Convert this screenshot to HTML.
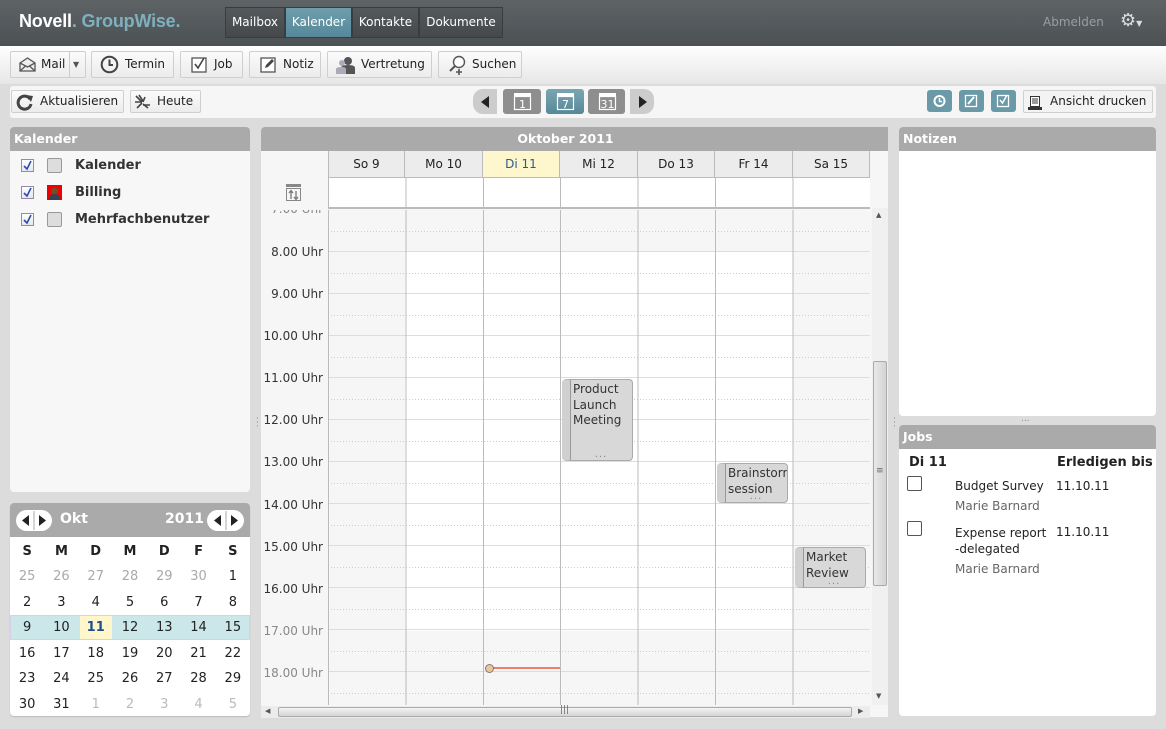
<!DOCTYPE html>
<html><head><meta charset="utf-8"><style>
*{box-sizing:border-box;margin:0;padding:0}
body{width:1166px;height:729px;overflow:hidden;background:#dcdcdc;font-family:"DejaVu Sans","Liberation Sans",sans-serif;font-size:12px;color:#222;position:relative}
.abs{position:absolute}
#top{left:0;top:0;width:1166px;height:46px;background:linear-gradient(#5e6366,#4c5154)}
.logo{left:19px;top:11px;font-family:"Liberation Sans",sans-serif;font-weight:bold;font-size:18px;color:#fff;letter-spacing:-0.2px}
.logo span{color:#7fb0be}
.tab{top:7px;height:31px;background:linear-gradient(#55595c,#45494b);border:1px solid #3a3d3f;color:#fff;font-size:12px;line-height:29px;text-align:center}
.tab.on{background:linear-gradient(#6e9eac,#55889a)}
#tb1{left:0;top:46px;width:1166px;height:38px;background:linear-gradient(#fff,#e6e6e6)}
.btn{height:27px;border:1px solid #cfcfcf;border-radius:2px;background:linear-gradient(#fbfbfb,#ececec);font-size:12px;line-height:25px;color:#222;white-space:nowrap}
.btn svg{position:absolute}
#tb2{left:10px;top:86px;width:1146px;height:32px;background:#f6f6f6;border-radius:3px}
.nav{top:89px;height:25px;background:#8e8e8e;border-radius:3px}
.panel{background:#f7f7f7;border-radius:4px;overflow:hidden}
.ph{height:24px;background:#aaa;color:#fff;font-weight:bold;font-size:12.5px;line-height:24px;padding-left:4px}
.cb{width:13px;height:13px;border:1px solid #98a;background:linear-gradient(#fff,#e4e6ee)}
.sq{width:15px;height:15px;border:1px solid #999;border-radius:2px;background:#ddd}
.lbl{font-weight:bold;font-size:13px;color:#333}
.mc{font-size:13px;text-align:center;width:34.3px}
.dh{top:151px;height:27px;background:#ececec;border-right:1px solid #bbb;border-bottom:1px solid #bbb;text-align:center;line-height:26px;font-size:12px}
.ev{background:#d8d8d8;border:1px solid #aaa;border-radius:4px;border-left:8px solid #d0d0d0;box-shadow:inset 1px 0 0 #999;font-size:12px;line-height:15.5px;color:#333;padding:2px 0 0 3px;overflow:hidden;white-space:nowrap}
.dots{position:absolute;bottom:-2px;left:0;right:0;text-align:center;color:#888;font-size:10px;letter-spacing:1px}
</style></head><body>
<div id="top" class="abs"></div>
<div class="abs logo">Novell<span>.</span> <span>GroupWise.</span></div>
<div class="abs tab" style="left:225px;width:60px">Mailbox</div>
<div class="abs tab on" style="left:285px;width:67px">Kalender</div>
<div class="abs tab" style="left:352px;width:67px">Kontakte</div>
<div class="abs tab" style="left:419px;width:84px">Dokumente</div>
<div class="abs" style="left:1043px;top:15px;color:#9a9ea0;font-size:12px">Abmelden</div>
<div class="abs" style="left:1120px;top:10px;color:#ddd;font-size:18px">⚙<span style="font-size:8px">▼</span></div>

<div id="tb1" class="abs"></div>
<div class="abs btn" style="left:10px;top:51px;width:76px;padding-left:30px">Mail<span style="position:absolute;left:58px;top:0;width:1px;height:25px;background:#ccc"></span><span style="position:absolute;left:62px;top:0;font-size:8px;color:#555">▼</span>
<svg style="left:8px;top:5px" width="17" height="15" viewBox="0 0 17 15"><path d="M1 6L8.5 1L16 6V14H1Z" fill="#eee" stroke="#555" stroke-width="1.3"/><path d="M1 6L8.5 10L16 6M1 14L6.5 9M16 14L10.5 9" fill="none" stroke="#555" stroke-width="1.3"/></svg></div>
<div class="abs btn" style="left:91px;top:51px;width:83px;padding-left:33px">Termin<svg style="left:8px;top:3px" width="19" height="19"><circle cx="9.5" cy="9.5" r="7.8" fill="none" stroke="#444" stroke-width="2"/><path d="M9.5 4.5V10H13" fill="none" stroke="#444" stroke-width="2"/></svg></div>
<div class="abs btn" style="left:180px;top:51px;width:63px;padding-left:33px">Job<svg style="left:10px;top:4px" width="17" height="17"><rect x="1" y="2" width="14" height="14" fill="#fff" stroke="#555" stroke-width="1.3"/><path d="M4 8L7 12L13 2" fill="none" stroke="#444" stroke-width="1.6"/></svg></div>
<div class="abs btn" style="left:249px;top:51px;width:72px;padding-left:33px">Notiz<svg style="left:10px;top:4px" width="17" height="17"><rect x="1" y="2" width="14" height="14" fill="#fff" stroke="#555" stroke-width="1.3"/><path d="M5 12L6 9L12 3L14 5L8 11Z" fill="#444"/></svg></div>
<div class="abs btn" style="left:327px;top:51px;width:105px;padding-left:33px">Vertretung<svg style="left:8px;top:4px" width="20" height="18"><circle cx="12" cy="5" r="4" fill="#555"/><path d="M5 18V12Q5 9 12 9Q19 9 19 12V18Z" fill="#555"/><circle cx="6" cy="7" r="3" fill="#aab"/><path d="M0 18V13Q0 11 6 11Q10 11 10 13V18Z" fill="#aab"/></svg></div>
<div class="abs btn" style="left:438px;top:51px;width:84px;padding-left:33px">Suchen<svg style="left:9px;top:3px" width="18" height="20"><circle cx="11" cy="7" r="5.5" fill="#fff" stroke="#555" stroke-width="1.4"/><path d="M7 11L2 16" stroke="#555" stroke-width="2"/><path d="M8 17H14M11 14V20" stroke="#555" stroke-width="1.6"/></svg></div>

<div id="tb2" class="abs"></div>
<div class="abs btn" style="left:11px;top:90px;width:113px;height:23px;line-height:21px;padding-left:28px">Aktualisieren<svg style="left:4px;top:2px" width="18" height="18"><path d="M14 6A6.5 6.5 0 1 0 15 11" fill="none" stroke="#444" stroke-width="3"/><path d="M10 2L17 3L15 9Z" fill="#444"/></svg></div>
<div class="abs btn" style="left:130px;top:90px;width:71px;height:23px;line-height:21px;padding-left:26px">Heute<svg style="left:3px;top:3px" width="18" height="16"><path d="M2 2L8 8M5 1L9 7M11 3L9 8M1 8H8M3 14L8 9M9 10L14 14M9 11H16" stroke="#444" stroke-width="1.6"/></svg></div>
<div class="abs" style="left:473px;top:89px;width:24px;height:25px;background:#ccc;border-radius:10px 0 0 10px"></div>
<svg class="abs" style="left:480px;top:96px" width="10" height="12"><path d="M9 0V12L1 6Z" fill="#222"/></svg>
<div class="abs nav" style="left:503px;width:38px"></div>
<div class="abs nav" style="left:546px;width:38px;background:linear-gradient(#7aa6b3,#578897)"></div>
<div class="abs nav" style="left:588px;width:37px"></div>
<svg class="abs" style="left:513px;top:92px" width="110" height="20"><g fill="none" stroke="#fff" stroke-width="1.2"><rect x="1.5" y="4.5" width="16" height="13"/><rect x="44.5" y="4.5" width="16" height="13"/><rect x="86.5" y="4.5" width="16" height="13"/></g><g fill="#fff"><rect x="1" y="1" width="17" height="3"/><rect x="44" y="1" width="17" height="3"/><rect x="86" y="1" width="17" height="3"/></g><g fill="#fff" font-family="DejaVu Sans" font-size="11" text-anchor="middle"><text x="9.5" y="16">1</text><text x="52.5" y="16">7</text><text x="94.5" y="16">31</text></g></svg>
<div class="abs" style="left:630px;top:89px;width:24px;height:25px;background:#ccc;border-radius:0 10px 10px 0"></div>
<svg class="abs" style="left:638px;top:96px" width="10" height="12"><path d="M1 0V12L9 6Z" fill="#222"/></svg>
<div class="abs nav" style="left:927px;top:90px;height:22px;width:25px;background:#6a9aa8"></div>
<div class="abs nav" style="left:959px;top:90px;height:22px;width:25px;background:#6a9aa8"></div>
<div class="abs nav" style="left:991px;top:90px;height:22px;width:25px;background:#6a9aa8"></div>
<svg class="abs" style="left:927px;top:90px" width="90" height="22"><circle cx="12.5" cy="11" r="5" fill="none" stroke="#fff" stroke-width="2"/><path d="M12.5 8V11.5H15" stroke="#fff" stroke-width="1.5" fill="none"/><rect x="38.5" y="5.5" width="11" height="11" fill="none" stroke="#fff" stroke-width="1.3"/><path d="M41 14L47 7" stroke="#fff" stroke-width="2"/><rect x="70.5" y="5.5" width="11" height="11" fill="none" stroke="#fff" stroke-width="1.3"/><path d="M73 10L75.5 13L80 5" stroke="#fff" stroke-width="1.5" fill="none"/></svg>
<div class="abs btn" style="left:1023px;top:90px;width:130px;height:23px;line-height:21px;padding-left:26px;background:#f3f3f3">Ansicht drucken<svg style="left:4px;top:5px" width="14" height="14"><rect x="2.5" y="0.5" width="9" height="10" fill="#fff" stroke="#333"/><path d="M4 3H10M4 5H10M4 7H10" stroke="#333"/><rect x="0" y="11" width="14" height="3" fill="#333"/></svg></div>

<!-- Left Kalender panel -->
<div class="abs panel" style="left:10px;top:127px;width:240px;height:365px"><div class="ph">Kalender</div></div>
<div class="abs cb" style="left:21px;top:159px"></div><div class="abs sq" style="left:47px;top:158px"></div><div class="abs lbl" style="left:75px;top:158px">Kalender</div>
<div class="abs cb" style="left:21px;top:186px"></div><div class="abs" style="left:47px;top:185px;width:15px;height:15px;background:#e00"><svg width="15" height="15"><circle cx="7.5" cy="6" r="3.5" fill="#7a4a2a"/><path d="M2 15Q2 9 7.5 9Q13 9 13 15Z" fill="#345"/></svg></div><div class="abs lbl" style="left:75px;top:185px">Billing</div>
<div class="abs cb" style="left:21px;top:213px"></div><div class="abs sq" style="left:47px;top:212px"></div><div class="abs lbl" style="left:75px;top:212px">Mehrfachbenutzer</div>
<svg class="abs" style="left:21px;top:159px" width="13" height="70"><g fill="none" stroke="#2a4ea8" stroke-width="1.6"><path d="M3 7L6 10L10 2"/><path d="M3 34L6 37L10 29"/><path d="M3 61L6 64L10 56"/></g></svg>

<!-- mini cal -->
<div class="abs panel" style="left:10px;top:503px;width:240px;height:213px;background:#fff;box-shadow:0 1px 1px #bbb"><div class="ph" style="height:34px"></div></div>
<div class="abs" style="left:16px;top:510px;width:36px;height:21px;background:#fff;border-radius:11px"></div>
<div class="abs" style="left:207px;top:510px;width:37px;height:21px;background:#fff;border-radius:11px"></div>
<svg class="abs" style="left:16px;top:510px" width="230" height="21"><path d="M18 1V20" stroke="#aaa"/><path d="M210 1V20" stroke="#aaa"/><path d="M13 5V16L6 10.5Z" fill="#222"/><path d="M23 5V16L30 10.5Z" fill="#222"/><path d="M205 5V16L198 10.5Z" fill="#222"/><path d="M215 5V16L222 10.5Z" fill="#222"/></svg>
<div class="abs" style="left:60px;top:511px;color:#fff;font-weight:bold;font-size:14px">Okt</div>
<div class="abs" style="left:165px;top:511px;color:#fff;font-weight:bold;font-size:14px">2011</div>
<div class="abs" style="left:10px;top:615px;width:240px;height:25px;background:#cbe7ea;border:1px solid #d6d0ea"></div>
<div class="abs" style="left:80px;top:616px;width:32px;height:23px;background:#fff6cc"></div>
<div class="abs" style="left:10px;top:544px;width:240px;font-size:13px">
<div style="display:flex;font-weight:bold;height:16px"><div class="mc">S</div><div class="mc">M</div><div class="mc">D</div><div class="mc">M</div><div class="mc">D</div><div class="mc">F</div><div class="mc">S</div></div>
<div style="display:flex;margin-top:9px;color:#aaa;height:25.5px"><div class="mc">25</div><div class="mc">26</div><div class="mc">27</div><div class="mc">28</div><div class="mc">29</div><div class="mc">30</div><div class="mc" style="color:#222">1</div></div>
<div style="display:flex;height:25.5px"><div class="mc">2</div><div class="mc">3</div><div class="mc">4</div><div class="mc">5</div><div class="mc">6</div><div class="mc">7</div><div class="mc">8</div></div>
<div style="display:flex;height:25.5px"><div class="mc">9</div><div class="mc">10</div><div class="mc" style="font-weight:bold;color:#1d4f8a">11</div><div class="mc">12</div><div class="mc">13</div><div class="mc">14</div><div class="mc">15</div></div>
<div style="display:flex;height:25.5px"><div class="mc">16</div><div class="mc">17</div><div class="mc">18</div><div class="mc">19</div><div class="mc">20</div><div class="mc">21</div><div class="mc">22</div></div>
<div style="display:flex;height:25.5px"><div class="mc">23</div><div class="mc">24</div><div class="mc">25</div><div class="mc">26</div><div class="mc">27</div><div class="mc">28</div><div class="mc">29</div></div>
<div style="display:flex;height:25.5px;color:#bbb"><div class="mc" style="color:#222">30</div><div class="mc" style="color:#222">31</div><div class="mc">1</div><div class="mc">2</div><div class="mc">3</div><div class="mc">4</div><div class="mc">5</div></div>
</div>

<!-- center -->
<div class="abs" style="left:256px;top:417px;color:#888;font-size:9px;line-height:4px">·<br>·<br>·</div>
<div class="abs" style="left:893px;top:417px;color:#888;font-size:9px;line-height:4px">·<br>·<br>·</div>
<div class="abs panel" style="left:261px;top:127px;width:627px;height:590px;background:#f6f6f6;border-radius:4px 4px 0 0"><div class="ph" style="text-align:center;padding:0;width:609px">Oktober 2011</div></div>
<div class="abs" style="left:870px;top:127px;width:18px;height:24px;background:#aaa"></div>
<div class="abs dh" style="left:328px;width:77px;border-left:1px solid #bbb">So 9</div>
<div class="abs dh" style="left:405px;width:78px">Mo 10</div>
<div class="abs dh" style="left:483px;width:77px;background:#fef6cc;color:#2a5c8c">Di 11</div>
<div class="abs dh" style="left:560px;width:78px">Mi 12</div>
<div class="abs dh" style="left:638px;width:77px">Do 13</div>
<div class="abs dh" style="left:715px;width:78px">Fr 14</div>
<div class="abs dh" style="left:793px;width:77px">Sa 15</div>
<div class="abs" style="left:328px;top:178px;width:542px;height:31px;background:#fff;border-left:1px solid #bbb;border-bottom:2px solid #bbb;background-image:repeating-linear-gradient(90deg,transparent 0 76.4px,#bbb 76.4px 77.4px)"></div>
<svg class="abs" style="left:285px;top:184px" width="17" height="18"><rect x="1" y="0" width="15" height="3" fill="#888"/><rect x="1.5" y="4.5" width="14" height="12" fill="none" stroke="#888"/><path d="M6 15V7M4 9L6 6.5L8 9M11 7V15M9 13L11 15.5L13 13" stroke="#777" fill="none" stroke-width="1.3"/></svg>

<div class="abs" style="left:261px;top:210px;width:609px;height:495px;overflow:hidden">
 <div class="abs" style="left:67px;top:0;width:542px;height:495px;background:#f6f6f6"></div>
 <div class="abs" style="left:144px;top:41px;width:388px;height:380px;background:#fff"></div>
 <div class="abs" style="left:67px;top:0;width:542px;height:495px;background-image:repeating-linear-gradient(180deg,transparent 0 41px,#ddd 41px 42px)"></div>
 <div class="abs" style="left:67px;top:21px;width:542px;height:474px;background-image:repeating-linear-gradient(90deg,#ccc 0 1px,transparent 1px 3px);-webkit-mask:repeating-linear-gradient(180deg,#000 0 1px,transparent 1px 42px);mask:repeating-linear-gradient(180deg,#000 0 1px,transparent 1px 42px)"></div>
 <div class="abs" style="left:67px;top:0;width:542px;height:495px;border-left:1px solid #bbb;background-image:repeating-linear-gradient(90deg,transparent 0 76.4px,#bbb 76.4px 77.4px)"></div>
</div>
<div class="abs" style="left:253px;top:0;width:70px;font-size:12px;color:#333;text-align:right">
 <div class="abs" style="right:0;top:245px;white-space:nowrap">8.00 Uhr</div>
 <div class="abs" style="right:0;top:287px;white-space:nowrap">9.00 Uhr</div>
 <div class="abs" style="right:0;top:329px;white-space:nowrap">10.00 Uhr</div>
 <div class="abs" style="right:0;top:371px;white-space:nowrap">11.00 Uhr</div>
 <div class="abs" style="right:0;top:413px;white-space:nowrap">12.00 Uhr</div>
 <div class="abs" style="right:0;top:455px;white-space:nowrap">13.00 Uhr</div>
 <div class="abs" style="right:0;top:498px;white-space:nowrap">14.00 Uhr</div>
 <div class="abs" style="right:0;top:540px;white-space:nowrap">15.00 Uhr</div>
 <div class="abs" style="right:0;top:582px;white-space:nowrap">16.00 Uhr</div>
 <div class="abs" style="right:0;top:624px;white-space:nowrap;color:#888">17.00 Uhr</div>
 <div class="abs" style="right:0;top:666px;white-space:nowrap;color:#888">18.00 Uhr</div>
</div>
<div class="abs" style="left:261px;top:210px;width:67px;height:9px;overflow:hidden"><div class="abs" style="right:5px;top:-8px;color:#888;font-size:12px;white-space:nowrap">7.00 Uhr</div></div>

<div class="abs ev" style="left:562px;top:379px;width:71px;height:82px">Product<br>Launch<br>Meeting<div class="dots">...</div></div>
<div class="abs ev" style="left:717px;top:463px;width:71px;height:40px">Brainstorm<br>session<div class="dots">...</div></div>
<div class="abs ev" style="left:795px;top:547px;width:71px;height:41px">Market<br>Review<div class="dots">...</div></div>
<div class="abs" style="left:489px;top:667px;width:71px;height:2px;background:#f07c6c"></div>
<div class="abs" style="left:485px;top:664px;width:9px;height:9px;border-radius:50%;background:#e8c89a;border:1px solid #877"></div>

<!-- scrollbars -->
<div class="abs" style="left:872px;top:208px;width:16px;height:497px;background:#f0f0f0"></div>
<div class="abs" style="left:873px;top:361px;width:14px;height:225px;background:linear-gradient(90deg,#e8e8e8,#d4d4d4);border:1px solid #aaa;border-radius:2px"></div>
<div class="abs" style="left:876px;top:466px;color:#666;font-size:9px">≡</div>
<div class="abs" style="left:876px;top:211px;color:#555;font-size:7px">▲</div>
<div class="abs" style="left:876px;top:692px;color:#555;font-size:7px">▼</div>
<div class="abs" style="left:261px;top:706px;width:609px;height:12px;background:#ececec"></div>
<div class="abs" style="left:278px;top:707px;width:574px;height:10px;background:linear-gradient(#f4f4f4,#d4d4d4);border:1px solid #aaa;border-radius:2px"></div>
<div class="abs" style="left:265px;top:707px;color:#555;font-size:7px">◀</div>
<div class="abs" style="left:858px;top:707px;color:#555;font-size:7px">▶</div>
<div class="abs" style="left:560px;top:705px;color:#666;font-size:9px">|||</div>

<!-- right panels -->
<div class="abs panel" style="left:899px;top:127px;width:257px;height:289px;background:#fff"><div class="ph">Notizen</div></div>
<div class="abs" style="left:1021px;top:414px;color:#888;font-size:9px">...</div>
<div class="abs panel" style="left:899px;top:425px;width:257px;height:291px;background:#fff"><div class="ph">Jobs</div></div>
<div class="abs" style="left:909px;top:455px;font-weight:bold;font-size:13px">Di 11</div>
<div class="abs" style="left:1057px;top:455px;font-weight:bold;font-size:13px">Erledigen bis</div>
<div class="abs" style="left:907px;top:476px;width:15px;height:15px;border:1px solid #555;border-radius:2px;background:#fff"></div>
<div class="abs" style="left:955px;top:479px;font-size:12px">Budget Survey</div>
<div class="abs" style="left:1056px;top:479px;font-size:12px">11.10.11</div>
<div class="abs" style="left:955px;top:499px;font-size:12px;color:#666">Marie Barnard</div>
<div class="abs" style="left:907px;top:521px;width:15px;height:15px;border:1px solid #555;border-radius:2px;background:#fff"></div>
<div class="abs" style="left:955px;top:525px;font-size:12px;line-height:16px">Expense report<br>-delegated</div>
<div class="abs" style="left:1056px;top:525px;font-size:12px">11.10.11</div>
<div class="abs" style="left:955px;top:562px;font-size:12px;color:#666">Marie Barnard</div>
</body></html>
